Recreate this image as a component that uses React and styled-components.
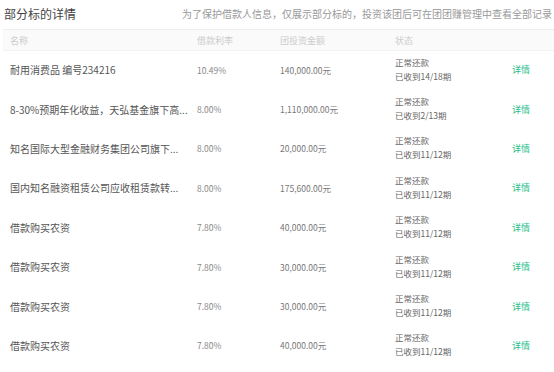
import React from "react";
import styled, { createGlobalStyle } from "styled-components";

const GlobalStyle = createGlobalStyle`
   html, body {
      margin: 0;
      padding: 0;
      background: #ffffff;
   }
   body {
      font-family: "Noto Sans CJK SC", "Noto Sans", sans-serif;
   }
`;

const COLS = "194px 83px 115px 114px 1fr";

const Detail = {
   Wrap: styled.section`
      width: 554px;
      height: 372px;
      overflow: hidden;
      box-sizing: border-box;
      padding-left: 3px;
   `,
   Head: styled.div`
      height: 29px;
      display: flex;
      align-items: center;
      justify-content: space-between;
      padding-left: 1px;
      box-sizing: border-box;
   `,
   Title: styled.h3`
      margin: 0;
      font-size: 12px;
      font-weight: 400;
      color: #444;
      line-height: 1;
      margin-top: -2px;
   `,
   Note: styled.p`
      margin: 0;
      font-size: 10px;
      color: #999;
      line-height: 1;
      padding-right: 2px;
      margin-top: -2px;
   `,
   Table: styled.div`
      display: flex;
      flex-direction: column;
   `,
   HeadRow: styled.div`
      display: grid;
      grid-template-columns: ${COLS};
      height: 22px;
      align-items: center;
      background-color: #fafafa;
      border-top: 1px solid #efefef;
      border-bottom: 1px solid #f3f3f3;
      box-sizing: border-box;
      font-size: 9px;
      color: #cccccc;
      > span:first-child {
         padding-left: 7px;
      }
   `,
   Row: styled.div`
      display: grid;
      grid-template-columns: ${COLS};
      height: 39.4px;
      align-items: center;
      margin-top: -1px;
      margin-bottom: 1px;
   `,
   Name: styled.span`
      padding-left: 7px;
      font-size: 10px;
      color: #555;
      white-space: nowrap;
   `,
   Rate: styled.span`
      font-size: 8.5px;
      color: #888;
   `,
   Amount: styled.span`
      font-size: 8.5px;
      color: #777;
   `,
   Status: styled.div`
      display: flex;
      flex-direction: column;
      font-size: 8.5px;
      line-height: 14px;
      color: #666;
      margin-top: -2px;
   `,
   Link: styled.a`
      font-size: 9px;
      color: #1ebe8c;
      text-decoration: none;
      padding-left: 3px;
      cursor: pointer;
   `,
};

const rows = [
   { name: "耐用消费品 编号234216", rate: "10.49%", amount: "140,000.00元", got: "14/18" },
   { name: "8-30%预期年化收益，天弘基金旗下高...", rate: "8.00%", amount: "1,110,000.00元", got: "2/13" },
   { name: "知名国际大型金融财务集团公司旗下...", rate: "8.00%", amount: "20,000.00元", got: "11/12" },
   { name: "国内知名融资租赁公司应收租赁款转...", rate: "8.00%", amount: "175,600.00元", got: "11/12" },
   { name: "借款购买农资", rate: "7.80%", amount: "40,000.00元", got: "11/12" },
   { name: "借款购买农资", rate: "7.80%", amount: "30,000.00元", got: "11/12" },
   { name: "借款购买农资", rate: "7.80%", amount: "30,000.00元", got: "11/12" },
   { name: "借款购买农资", rate: "7.80%", amount: "40,000.00元", got: "11/12" },
];

function App() {
   return (
      <>
         <GlobalStyle />
         <Detail.Wrap>
            <Detail.Head>
               <Detail.Title>部分标的详情</Detail.Title>
               <Detail.Note>
                  为了保护借款人信息，仅展示部分标的，投资该团后可在团团赚管理中查看全部记录
               </Detail.Note>
            </Detail.Head>

            <Detail.Table>
               <Detail.HeadRow>
                  <span>名称</span>
                  <span>借款利率</span>
                  <span>团投资金额</span>
                  <span>状态</span>
                  <span></span>
               </Detail.HeadRow>

               {rows.map((r, i) => (
                  <Detail.Row key={i}>
                     <Detail.Name>{r.name}</Detail.Name>
                     <Detail.Rate>{r.rate}</Detail.Rate>
                     <Detail.Amount>{r.amount}</Detail.Amount>
                     <Detail.Status>
                        <span>正常还款</span>
                        <span>已收到{r.got}期</span>
                     </Detail.Status>
                     <Detail.Link>详情</Detail.Link>
                  </Detail.Row>
               ))}
            </Detail.Table>
         </Detail.Wrap>
      </>
   );
}

export default App;
